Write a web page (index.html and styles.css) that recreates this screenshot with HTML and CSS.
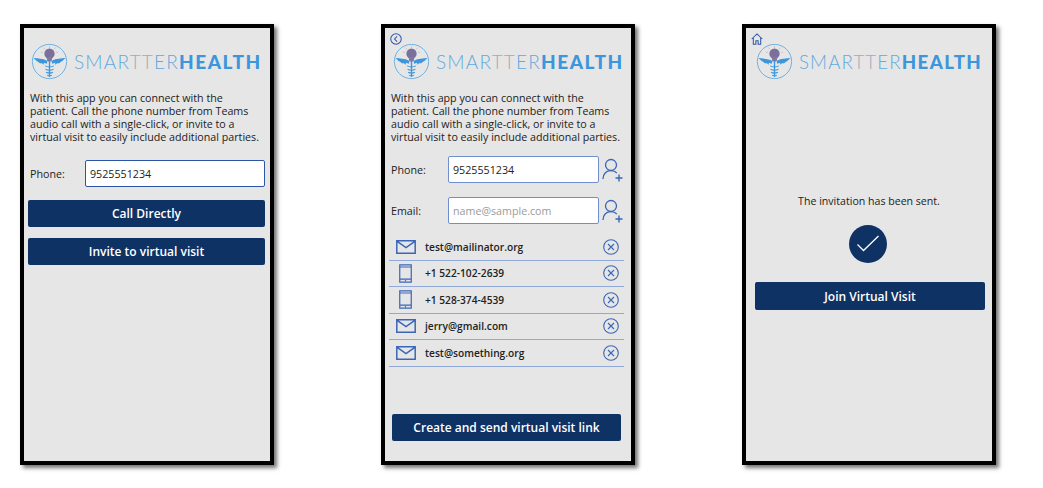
FILE: index.html
```html
<!DOCTYPE html>
<html lang="en">
<head>
<meta charset="utf-8">
<title>SmartterHealth</title>
<link rel="stylesheet" href="styles.css">
</head>
<body>
<svg class="defs" width="0" height="0" aria-hidden="true">
  <defs>
    <symbol id="logo-mark" viewBox="0 0 38 38">
      <circle cx="19" cy="19" r="17.6" fill="none" stroke="#6db0e2" stroke-width="1"/>
      <path d="M12.500 4.500l1.800 2.200M19 2.800v2.400M25.500 4.500l-1.800 2.200M10 9.500h2.500M25.500 9.500H28" stroke="#c2bdcc" stroke-width=".8"/>
      <circle cx="19" cy="11" r="5.300" fill="#7b6f9c"/>
      <path d="M16 14.500h6l-.8 4.500h-4.400z" fill="#8078a0"/>
      <path d="M2.500 15.500c4.500.4 9.500.5 14 2.700v3.100l-3.500-.9.500 2-3.500-2-.2 1-3-2.400C5.500 18.500 4 17 2.500 15.500z" fill="#3d96dc"/>
      <path d="M35.500 15.500c-4.500.4-9.500.5-14 2.700v3.100l3.500-.9-.5 2 3.500-2 .2 1 3-2.400c1.300-.5 2.800-2 4.300-3.500z" fill="#3d96dc"/>
      <path d="M19 18v17" stroke="#3d96dc" stroke-width="1.400"/>
      <path d="M14.500 23.500c3 1.500 6 1.500 9 0M15 27c2.500 1.300 5.500 1.300 8 0M15.500 30c2.500 1.300 4.500 1.300 7 0M16.500 33c1.500.9 3.500.9 5 0" fill="none" stroke="#3d96dc" stroke-width="1.100"/>
    </symbol>
    <symbol id="add-person" viewBox="0 0 22 24">
      <circle cx="10" cy="7" r="5.500" fill="none" stroke="currentColor" stroke-width="1.300"/>
      <path d="M2 21c0-5 3-8.300 8-8.300 2.500 0 4.500.8 5.800 2.300" fill="none" stroke="currentColor" stroke-width="1.300"/>
      <path d="M14.500 20h7M18 16.500v7" stroke="currentColor" stroke-width="1.400"/>
    </symbol>
    <symbol id="mail" viewBox="0 0 20 14">
      <path d="M.8.800h18.400v12.400H.8zM.8 1.200l9.200 6.300 9.200-6.300" fill="none" stroke="currentColor" stroke-width="1.500"/>
    </symbol>
    <symbol id="mobile" viewBox="0 0 14 20">
      <path d="M.8.700h12.400v18.600H.8zM.8 3h12.400M.8 16h12.400" fill="none" stroke="currentColor" stroke-width="1.300"/>
      <circle cx="7" cy="17.700" r=".8" fill="currentColor"/>
    </symbol>
    <symbol id="remove" viewBox="0 0 16 16">
      <circle cx="8" cy="8" r="7.300" fill="none" stroke="currentColor" stroke-width="1.100"/>
      <path d="M5 5l6 6M11 5l-6 6" stroke="currentColor" stroke-width="1.100"/>
    </symbol>
  </defs>
</svg>

<section class="phone phone-intro">
  <div class="logo">
    <svg class="logo-mark"><use href="#logo-mark"/></svg>
    <span class="wordmark">SMAR<span class="tint">TT</span>ER<b>HEALTH</b></span>
  </div>
  <p class="intro">With this app you can connect with the patient. Call the phone number from Teams audio call with a single-click, or invite to a virtual visit to easily include additional parties.</p>
  <div class="field field-wide">
    <label class="field-label">Phone:</label>
    <div class="input input-focus">9525551234</div>
  </div>
  <div class="btn btn-first">Call Directly</div>
  <div class="btn btn-second">Invite to virtual visit</div>
</section>

<section class="phone phone-invite">
  <svg class="corner-icon" viewBox="0 0 13 13"><circle cx="6.500" cy="6.500" r="5.700" fill="none" stroke="#2c55a8" stroke-width="1.100"/><path d="M7.700 3.700L4.900 6.500l2.800 2.800" fill="none" stroke="#2c55a8" stroke-width="1.100"/></svg>
  <div class="logo">
    <svg class="logo-mark"><use href="#logo-mark"/></svg>
    <span class="wordmark">SMAR<span class="tint">TT</span>ER<b>HEALTH</b></span>
  </div>
  <p class="intro">With this app you can connect with the patient. Call the phone number from Teams audio call with a single-click, or invite to a virtual visit to easily include additional parties.</p>
  <div class="field field-add">
    <label class="field-label">Phone:</label>
    <div class="input">9525551234</div>
    <svg class="add-icon"><use href="#add-person"/></svg>
  </div>
  <div class="field field-add field-email">
    <label class="field-label">Email:</label>
    <div class="input input-empty">name@sample.com</div>
    <svg class="add-icon"><use href="#add-person"/></svg>
  </div>
  <ul class="contacts">
    <li class="contact"><svg class="icon-mail"><use href="#mail"/></svg><span class="contact-name">test@mailinator.org</span><svg class="icon-remove"><use href="#remove"/></svg></li>
    <li class="contact"><svg class="icon-mobile"><use href="#mobile"/></svg><span class="contact-name">+1 522-102-2639</span><svg class="icon-remove"><use href="#remove"/></svg></li>
    <li class="contact"><svg class="icon-mobile"><use href="#mobile"/></svg><span class="contact-name">+1 528-374-4539</span><svg class="icon-remove"><use href="#remove"/></svg></li>
    <li class="contact"><svg class="icon-mail"><use href="#mail"/></svg><span class="contact-name">jerry@gmail.com</span><svg class="icon-remove"><use href="#remove"/></svg></li>
    <li class="contact"><svg class="icon-mail"><use href="#mail"/></svg><span class="contact-name">test@something.org</span><svg class="icon-remove"><use href="#remove"/></svg></li>
  </ul>
  <div class="btn btn-create">Create and send virtual visit link</div>
</section>

<section class="phone phone-sent">
  <svg class="corner-icon" viewBox="0 0 13 13"><path d="M.8 6.500L6.500 1l5.700 5.500M2.500 5.500v6.700h2.800V8.500h2.400v3.700h2.800V5.500" fill="none" stroke="#2c55a8" stroke-width="1.100"/></svg>
  <div class="logo">
    <svg class="logo-mark"><use href="#logo-mark"/></svg>
    <span class="wordmark">SMAR<span class="tint">TT</span>ER<b>HEALTH</b></span>
  </div>
  <p class="sent-message">The invitation has been sent.</p>
  <svg class="sent-check" viewBox="0 0 38 38"><circle cx="19" cy="19" r="19" fill="#0f3264"/><path d="M8.500 19.500l6 6L29.500 11" fill="none" stroke="#fff" stroke-width="1.300"/></svg>
  <div class="btn btn-join">Join Virtual Visit</div>
</section>
</body>
</html>
```
FILE: styles.css
```css
* { box-sizing: border-box; }

html, body { margin: 0; height: 100%; }

body {
  display: flex;
  align-items: flex-start;
  gap: 107px;
  padding: 24px 0 0 20px;
  background: #fff;
  font-family: "Open Sans", "Liberation Sans", sans-serif;
  color: #222;
  overflow: hidden;
}

.defs { position: absolute; }

.phone {
  position: relative;
  display: flex;
  flex-direction: column;
  flex: none;
  width: 254px;
  height: 441px;
  padding: 15px 0 0;
  background: #e6e6e6;
  border: 4px solid #000;
  box-shadow: 3px 3px 4px rgba(0, 0, 0, .55);
}

.logo {
  display: flex;
  align-items: center;
  height: 37px;
  padding-left: 7px;
  gap: 6px;
}

.logo-mark { width: 37px; height: 37px; flex: none; }

.wordmark {
  font-family: Lato, "Open Sans", sans-serif;
  font-weight: 300;
  font-size: 19px;
  letter-spacing: 1.2px;
  color: #5fa9de;
  white-space: nowrap;
}

.wordmark b { font-weight: 900; color: #3d96dc; letter-spacing: 1.55px; }
.tint { color: #a7a6bf; }

.intro {
  margin: 12px 0 0 6px;
  width: 231px;
  font-size: 10.700px;
  line-height: 13px;
}

.field { display: flex; align-items: center; }

.field-wide { margin: 16px 0 0 6px; }
.field-wide .field-label { width: 55px; }
.field-wide .input { width: 180px; }

.field-add { margin: 12px 0 0 6px; }
.field-email { margin-top: 14px; }
.field-add .field-label { width: 57px; }
.field-add .input { width: 151px; }

.field-label { font-size: 10.700px; flex: none; }

.input {
  flex: none;
  height: 27px;
  padding: 0 4px;
  display: flex;
  align-items: center;
  background: #fff;
  border: 1px solid #6f8fcf;
  border-radius: 2px;
  font-size: 10.700px;
}

.input-focus { border: 1.500px solid #2c55a8; }
.input-empty { color: #9a9a9a; }

.add-icon { width: 22px; height: 24px; margin-left: 2px; color: #3a66b8; flex: none; }

.btn {
  display: flex;
  align-items: center;
  justify-content: center;
  height: 27px;
  background: #0f3264;
  border-radius: 2px;
  color: #fff;
  font-size: 12px;
  font-weight: 600;
}

.btn-first { margin: 13px 5px 0 4px; }
.btn-second { margin: 11px 5px 0 4px; }
.btn-create { margin: 47px 10px 0 7px; }

.contacts { margin: 10px 7px 0 4px; padding: 0; list-style: none; }

.contact {
  display: flex;
  align-items: center;
  height: 26.500px;
  border-bottom: 1px solid #8faad9;
  color: #3a66b8;
}

.icon-mail { width: 20px; height: 14px; margin-left: 7px; flex: none; }
.icon-mobile { width: 13px; height: 19px; margin-left: 10px; margin-right: 4px; flex: none; }

.contact-name {
  flex: 1;
  margin-left: 9px;
  font-size: 10.200px;
  font-weight: 600;
  color: #222;
}

.icon-remove { width: 16px; height: 16px; margin-right: 5px; flex: none; }

.corner-icon { position: absolute; left: 5px; top: 5px; width: 12px; height: 12px; }

.phone-invite .logo { padding-left: 8px; }

.phone-sent .logo { padding-left: 10px; }
.phone-sent .wordmark { font-size: 18.700px; letter-spacing: 1.100px; }
.phone-sent .wordmark b { letter-spacing: 1.400px; }

.sent-message {
  margin: 113px 0 0;
  text-align: center;
  font-size: 10.600px;
  line-height: 16px;
}

.sent-check { flex: none; width: 38px; height: 38px; margin: 16px 0 0 103px; }
.btn-join { margin: 19px 7px 0 9px; height: 28px; }
```
